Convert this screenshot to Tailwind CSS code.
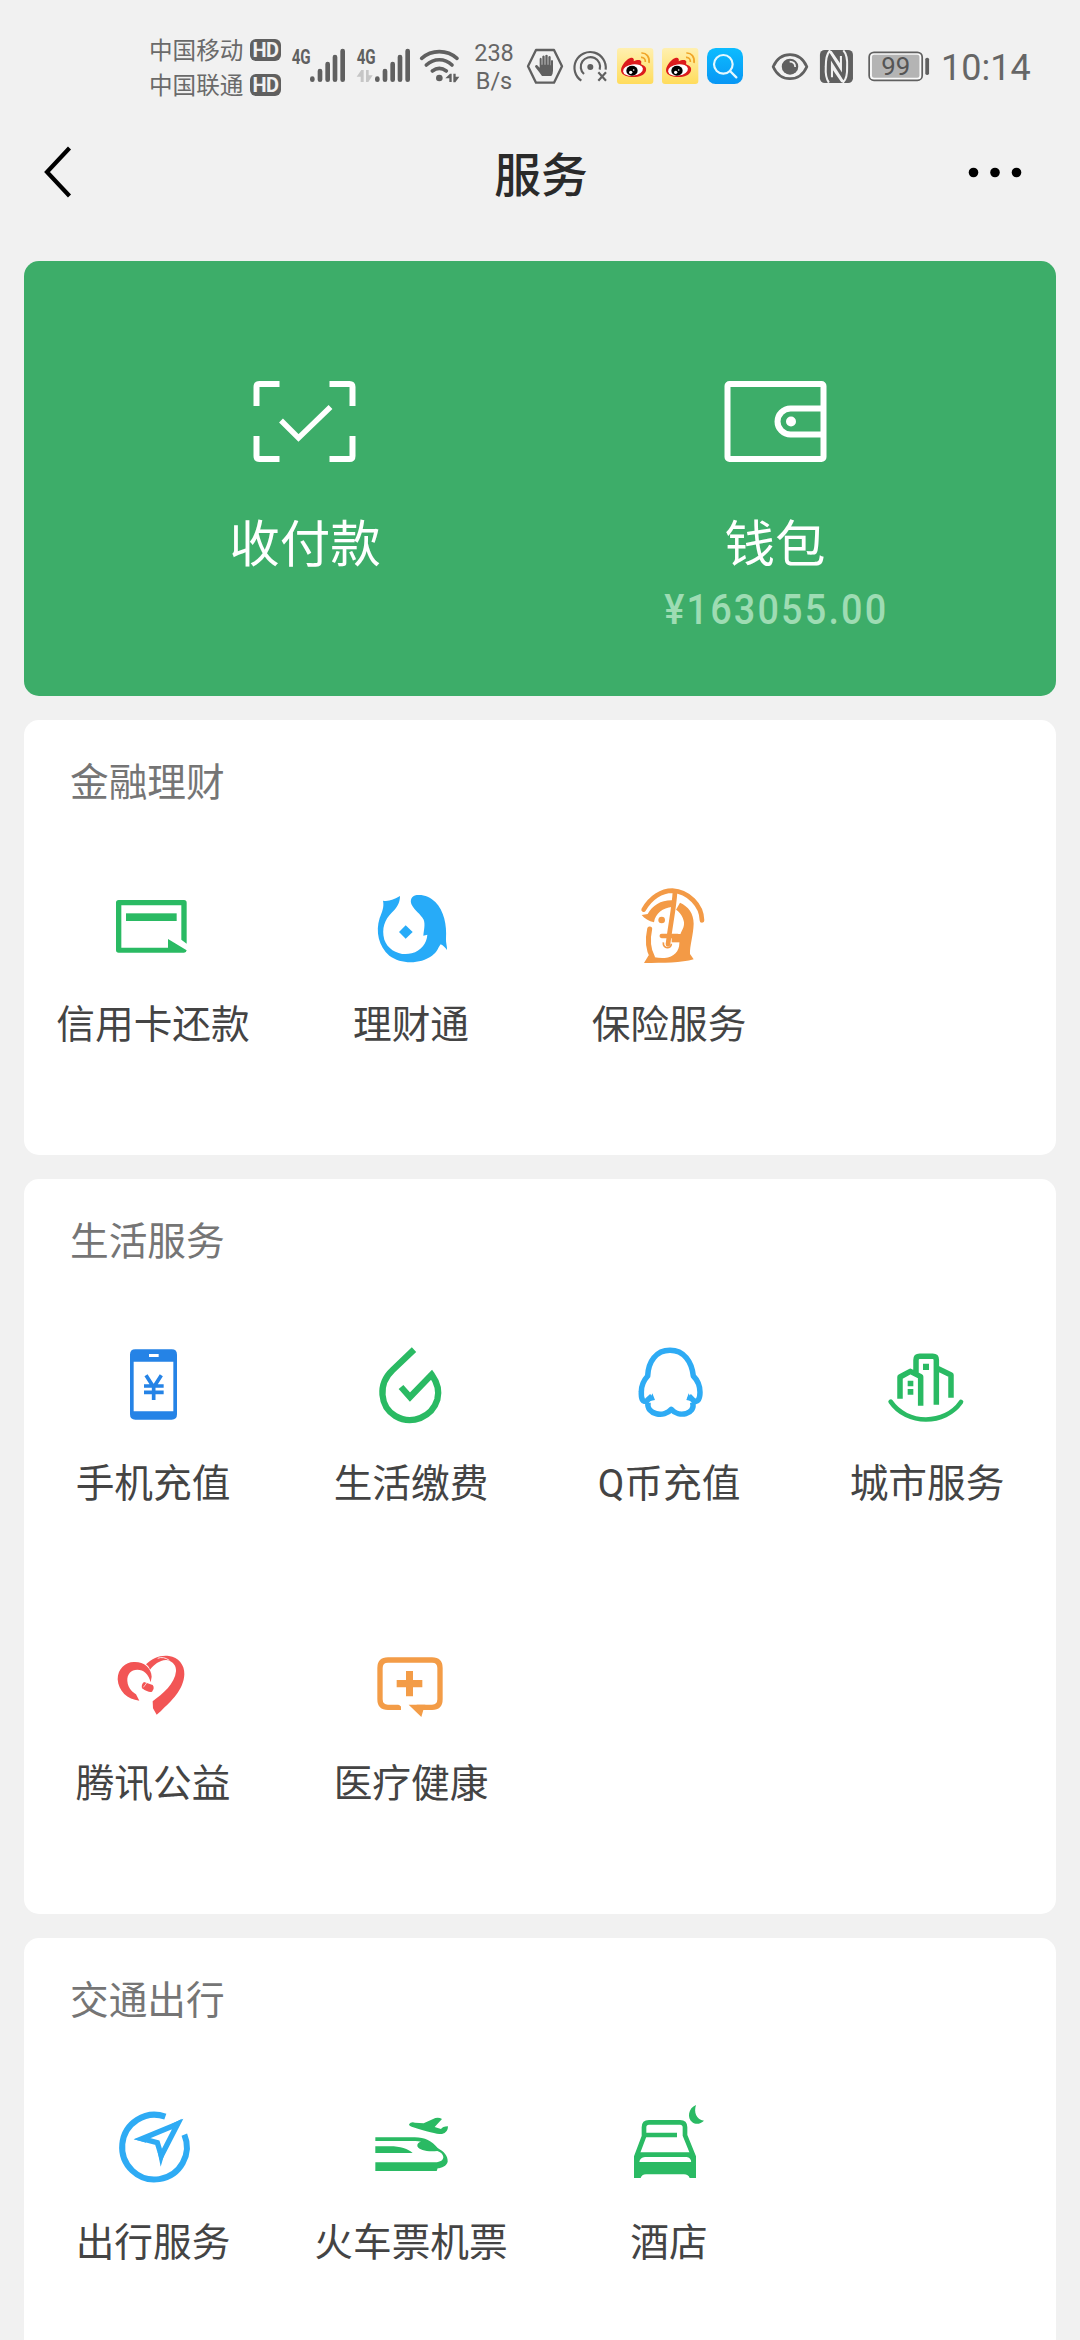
<!DOCTYPE html>
<html lang="zh-CN">
<head>
<meta charset="utf-8">
<title>服务</title>
<script src="https://cdn.jsdelivr.net/npm/@tailwindcss/browser@4"></script>
</head>
<body class="w-[1080px] h-[2340px] overflow-hidden bg-[#f1f1f1] font-['Roboto','Noto_Sans_CJK_SC',sans-serif]">

<!-- Status bar -->
<div class="flex h-[130px] pt-5 pl-[149px] text-[#606060] whitespace-nowrap">
  <div class="flex flex-col w-[101px] h-[90px] pt-[12px] text-[23.6px] leading-[35px] font-['Noto_Sans_CJK_SC',sans-serif] font-normal text-[#6a6a6a]">
    <span>中国移动</span>
    <span>中国联通</span>
  </div>
  <div class="flex flex-col w-[38px] pt-[19px] gap-[13px] font-['Roboto',sans-serif]">
    <span class="w-[31px] h-[22px] rounded-[6px] bg-[#606060] text-[#f1f1f1] text-[20px] leading-[22px] font-bold text-center tracking-[-0.5px]">HD</span>
    <span class="w-[31px] h-[22px] rounded-[6px] bg-[#606060] text-[#f1f1f1] text-[20px] leading-[22px] font-bold text-center tracking-[-0.5px]">HD</span>
  </div>
  <svg class="w-[62px] h-[90px]" viewBox="474 0 186 270" fill="#606060">
    <text x="485" y="132" font-family="Roboto" font-weight="700" font-size="62" textLength="57" lengthAdjust="spacingAndGlyphs">4G</text>
    <g stroke="#606060" stroke-width="14" stroke-linecap="round"><path d="M547 176v3M570 153v26M593 132v47M615 111v68M638 93v86"/></g>
  </svg>
  <svg class="w-[64px] h-[90px]" viewBox="660 0 192 270" fill="#606060">
    <text x="680" y="132" font-family="Roboto" font-weight="700" font-size="62" textLength="57" lengthAdjust="spacingAndGlyphs">4G</text>
    <path fill="#c6c6c6" d="M680 170l14-20h7v36h-9v-16zM728 166l-13 20h-7v-36h8v16z"/>
    <g stroke="#606060" stroke-width="14" stroke-linecap="round"><path d="M742 176v3M765 153v26M788 132v47M810 111v68M833 93v86"/></g>
  </svg>
  <svg class="w-[50px] h-[90px]" viewBox="852 0 150 270" fill="none">
    <g stroke="#606060" stroke-width="11" stroke-linecap="round"><path d="M875 115C905 88 951 88 981 115M889 135C912 114 944 114 966 135M907 153C920 143 936 143 949 153"/></g>
    <circle cx="928" cy="174" r="10" fill="#606060"/>
    <path fill="#606060" d="M946 175l14-14h5v25h-7v-11zM988 170l-12 17h-6v-26h7v9z"/>
  </svg>
  <div class="flex flex-col w-[60px] h-[90px] pt-[19px] text-[23.500px] leading-[28px] items-center text-[#666]">
    <span>238</span>
    <span>B/s</span>
  </div>
  <svg class="w-[42px] h-[90px]" viewBox="12 -30 126 270" fill="none">
    <path d="M48 60h54l24 49-24 49H48L24 109z" stroke="#606060" stroke-width="7" stroke-linejoin="round"/>
    <path fill="#606060" d="M59 128L45 110q0-6 6-5l8 8V86q3-5 6 0v18h2V79q4-5 7 0v25h2V76q4-4 7 0v28h2V80q4-4 7 0v26h1V92q3-4 6 0v30q0 9-5 16H66z"/>
  </svg>
  <svg class="w-[46px] h-[90px]" viewBox="138 -30 138 270" fill="none" stroke="#606060" stroke-width="6.500">
    <circle cx="211" cy="111" r="9" fill="#606060" stroke="none"/>
    <path d="M184 152A47 47 0 1 1 257 119M192 132A29 29 0 1 1 239 119"/>
    <path d="M235 127l23 25M258 127l-23 25"/>
  </svg>
  <svg class="w-[45px] h-[90px]" viewBox="276 -30 135 270" fill="none">
    <defs><linearGradient id="gold" x1="0" y1="0" x2="0" y2="1"><stop offset="0" stop-color="#fff0b0"/><stop offset="1" stop-color="#ffdc5c"/></linearGradient></defs>
    <rect x="291" y="54" width="109" height="108" rx="9" fill="url(#gold)"/>
    <path d="M364 69C379 68 390 81 387 99M363 82C371 81 377 88 376 96" stroke="#f0a528" stroke-width="5"/>
    <path d="M303 120C304 104 323 84 333 83C341 82 343 88 341 94C350 89 363 88 364 95C364 100 361 102 368 105C376 108 380 114 378 122C374 136 356 142 335 141C315 140 303 132 303 120Z" fill="#dc1a1c"/>
    <ellipse cx="339" cy="120" rx="30" ry="17" fill="#fff" transform="rotate(-8 339 120)"/>
    <ellipse cx="336" cy="122" rx="17" ry="15" fill="#000"/>
    <circle cx="332" cy="127" r="5" fill="#fff"/><circle cx="341" cy="120" r="2.500" fill="#fff"/>
  </svg>
  <svg class="w-[45px] h-[90px]" viewBox="276 -30 135 270" fill="none">
    <rect x="291" y="54" width="109" height="108" rx="9" fill="url(#gold)"/>
    <path d="M364 69C379 68 390 81 387 99M363 82C371 81 377 88 376 96" stroke="#f0a528" stroke-width="5"/>
    <path d="M303 120C304 104 323 84 333 83C341 82 343 88 341 94C350 89 363 88 364 95C364 100 361 102 368 105C376 108 380 114 378 122C374 136 356 142 335 141C315 140 303 132 303 120Z" fill="#dc1a1c"/>
    <ellipse cx="339" cy="120" rx="30" ry="17" fill="#fff" transform="rotate(-8 339 120)"/>
    <ellipse cx="336" cy="122" rx="17" ry="15" fill="#000"/>
    <circle cx="332" cy="127" r="5" fill="#fff"/><circle cx="341" cy="120" r="2.500" fill="#fff"/>
  </svg>
  <svg class="w-[46px] h-[90px]" viewBox="546 -30 138 270" fill="none">
    <defs><linearGradient id="sky" x1="0" y1="0" x2="0" y2="1"><stop offset="0" stop-color="#0cbcff"/><stop offset="1" stop-color="#0896f4"/></linearGradient></defs>
    <rect x="561" y="54" width="108" height="108" rx="26" fill="url(#sky)"/>
    <circle cx="610" cy="103" r="28" stroke="#e4f8ff" stroke-width="6.500"/>
    <path d="M630 123l19 19" stroke="#e4f8ff" stroke-width="7" stroke-linecap="round"/>
  </svg>
  <svg class="ml-5 w-[44px] h-[90px]" viewBox="749 0 128 270" preserveAspectRatio="none" fill="none">
    <path d="M764 140C785 92 841 92 862 140C841 188 785 188 764 140Z" stroke="#606060" stroke-width="8" stroke-linejoin="round"/>
    <circle cx="813" cy="140" r="24" fill="#606060"/>
    <path d="M812 125Q828 125 828 141" stroke="#f1f1f1" stroke-width="5"/>
  </svg>
  <svg class="ml-1 w-[40px] h-[90px]" viewBox="888.6 0 116.2 270" preserveAspectRatio="none">
    <rect x="900" y="90" width="96" height="99" rx="14" fill="#606060"/>
    <path fill="none" stroke="#f1f1f1" stroke-width="6" d="M926 188Q915 172 917 140Q917 106 928 93L961 147V108M968 91Q981 106 979 140Q980 174 968 186L935 132V172"/>
    <path fill="#f1f1f1" d="M926 93l36 56v-14l-28-42zM970 187l-36-56v14l28 42z"/>
  </svg>
  <svg class="ml-2 w-[68px] h-[90px]" viewBox="1028 0 197.5 270" preserveAspectRatio="none">
    <rect x="1043" y="97" width="154" height="84" rx="14" fill="#fafafa" stroke="#606060" stroke-width="5"/>
    <rect x="1051" y="104" width="138" height="69" rx="6" fill="#b4b4b4"/>
    <rect x="1206" y="113" width="11" height="52" rx="5" fill="#606060"/>
    <text x="1078" y="166" font-family="Roboto" font-size="76" fill="#555" textLength="84" lengthAdjust="spacingAndGlyphs">99</text>
  </svg>
  <span class="ml-[9px] mt-[26px] text-[36px] leading-[44px] text-[#666]">10:14</span>
</div>

<!-- Title bar -->
<header class="flex h-[84px] items-center justify-between pl-[44px] pr-[56px]">
  <svg class="w-[60px] h-[54px]" viewBox="44 145 60 54" fill="none"><path d="M69.500 148L47 172L69.500 196" stroke="#000" stroke-width="4.200"/></svg>
  <h1 class="text-[46.800px] leading-[60px] font-medium text-[#2a2a2a] pt-[7px] pl-[14px]">服务</h1>
  <svg class="w-[60px] h-[54px]" viewBox="964 145 60 54"><circle cx="973.500" cy="172.500" r="4.800"/><circle cx="995" cy="172.500" r="4.800"/><circle cx="1016.500" cy="172.500" r="4.800"/></svg>
</header>

<main class="flex flex-col gap-6 px-6 pt-[47px]">
  <!-- Pay and wallet -->
  <section class="grid grid-cols-2 h-[435px] rounded-[15px] bg-[#3dad69] px-[46px] pt-[119px] text-white">
    <div class="flex flex-col items-center">
      <svg class="w-[104px] h-[84px]" viewBox="252.5 380 104 84" fill="none" stroke="#fff" stroke-width="6">
        <path d="M256 406V387q0-3 3-3h20M329 384h20q3 0 3 3v19M352 436v20q0 3-3 3h-20M279 459h-20q-3 0-3-3v-20"/>
        <path d="M280.500 420.500L298 438L330 407" stroke-width="5.500"/>
      </svg>
      <div class="mt-[51px] text-[50.500px] leading-[60px]">收付款</div>
    </div>
    <div class="flex flex-col items-center">
      <svg class="w-[104px] h-[84px]" viewBox="722.5 380 104 84" fill="none" stroke="#fff" stroke-width="6">
        <rect x="727" y="384" width="96" height="75" rx="2"/>
        <path d="M823 408.500H790a13 13 0 0 0 0 26H823"/>
        <circle cx="790.500" cy="421.500" r="5" fill="#fff" stroke="none"/>
      </svg>
      <div class="mt-[51px] text-[50.500px] leading-[60px]">钱包</div>
      <div class="mt-[17px] pl-[3px] text-[42px] leading-9 font-medium text-[#9edcb3] tracking-[2.400px] scale-x-90">¥163055.00</div>
    </div>
  </section>

  <!-- Finance -->
  <section class="h-[435px] rounded-[15px] bg-white">
    <h2 class="h-[135px] pt-[35px] pl-[46px] text-[38.700px] leading-[48px] text-[#757575] font-['Noto_Sans_CJK_SC',sans-serif] font-normal">金融理财</h2>
    <div class="grid grid-cols-4 text-[38.700px] leading-10 text-[#444]">
      <div class="flex h-[300px] flex-col items-center gap-[25px] pt-[25px]">
        <svg class="w-[100px] h-[100px]" viewBox="249 540 300 300" fill="#2aba63">
          <path fill-rule="evenodd" d="M296 600h196q8 0 8 8v123l-16-12V616H304V743h140v-26l56 34q-1 7-8 7H296q-8 0-8-8V608q0-8 8-8z"/>
          <rect x="318" y="640" width="152" height="23"/>
        </svg>
        <span>信用卡还款</span>
      </div>
      <div class="flex h-[300px] flex-col items-center gap-[25px] pt-[25px]">
        <svg class="w-[100px] h-[100px]" viewBox="3 60 300 300" fill="#27abf8">
          <path d="M120 108C102 119 86 125 69 122C73 140 66 157 59 174C46 215 56 259 88 287C123 313 180 313 216 287C231 278 235 262 242 253C250 257 256 263 261 270C262 260 257 247 258 236C261 195 252 153 226 126C210 109 190 103 170 105C154 107 149 121 155 134C164 151 181 161 191 179C196 193 192 208 190 227L202 224C200 250 184 272 155 280C119 289 84 270 73 239C64 205 74 179 95 158C110 145 120 129 120 108Z"/>
          <path d="M137 196l21 20-21 20-20-20z"/>
        </svg>
        <span>理财通</span>
      </div>
      <div class="flex h-[300px] flex-col items-center gap-[25px] pt-[25px]">
        <svg class="w-[100px] h-[100px]" viewBox="777 60 300 300" fill="none">
          <g stroke="#f39a46" stroke-linecap="round">
            <path stroke-width="14" d="M851 149C872 112 905 92 937 92C986 95 1025 136 1026 181"/>
            <path stroke-width="14" d="M945 96C942 145 931 195 924 253"/>
            <path stroke-width="15" d="M869 207C863 235 863 265 877 291"/>
            <path stroke-width="13" d="M905 228H953"/>
          </g>
          <path fill="#f39a46" d="M940 121C905 119 878 135 863 162L845 165C853 176 867 183 882 187C886 160 909 143 936 141ZM960 128C985 139 1001 160 1001 191C1000 225 989 258 990 282L1001 298C965 309 910 309 852 309L866 286C878 292 894 295 914 294C942 292 958 274 958 250L962 220C966 211 973 203 972 187C970 171 960 156 948 149Z"/>
          <circle cx="905" cy="180" r="10" fill="#f39a46"/>
          <path d="M910 247C908 268 934 268 934 251" stroke="#f39a46" stroke-width="5"/>
          <path fill="#f39a46" d="M935 222h28v25h-28z"/>
        </svg>
        <span>保险服务</span>
      </div>
    </div>
  </section>

  <!-- Daily services -->
  <section class="h-[735px] rounded-[15px] bg-white">
    <h2 class="h-[135px] pt-[35px] pl-[46px] text-[38.700px] leading-[48px] text-[#757575] font-['Noto_Sans_CJK_SC',sans-serif] font-normal">生活服务</h2>
    <div class="grid grid-cols-4 text-[38.700px] leading-10 text-[#444]">
      <div class="flex h-[300px] flex-col items-center gap-[25px] pt-[25px]">
        <svg class="w-[100px] h-[100px]" viewBox="249 507 300 300" fill="#2583e6">
          <path fill-rule="evenodd" d="M346 538h109q16 0 16 16v179q0 16-16 16H346q-16 0-16-16V554q0-16 16-16zM341 575v149h119V575zM387 552v9h29v-9z"/>
          <path fill="none" stroke="#2583e6" stroke-width="11" d="M378 616l23 36 23-36M401 648v42M372 648h59M372 667h59"/>
        </svg>
        <span>手机充值</span>
      </div>
      <div class="flex h-[300px] flex-col items-center gap-[25px] pt-[25px]">
        <svg class="w-[100px] h-[100px]" viewBox="1023 507 300 300" fill="none">
          <path stroke="#2aba63" stroke-width="19" d="M1182 539L1118 600C1072 643 1080 710 1126 738C1175 767 1236 741 1252 689C1259 663 1250 635 1235 614L1170 681L1143 651"/>
        </svg>
        <span>生活缴费</span>
      </div>
      <div class="flex h-[300px] flex-col items-center gap-[25px] pt-[25px]">
        <svg class="w-[100px] h-[100px]" viewBox="177 57 300 300" fill="none">
          <path stroke="#2eabf4" stroke-width="16.500" stroke-linejoin="round" d="M276 228L262 241C247 250 243 235 244 215C244 195 252 180 263 168C265 125 288 91 330 91C372 91 395 125 400 168C412 180 420 195 420 217C420 235 414 250 400 241L387 228M264 247C258 285 314 293 334 268C356 293 408 284 398 247"/>
          <path fill="#2eabf4" d="M277 220l8 20-18 4zM386 220l-7 20 18 4z"/>
        </svg>
        <span>Q币充值</span>
      </div>
      <div class="flex h-[300px] flex-col items-center gap-[25px] pt-[25px]">
        <svg class="w-[100px] h-[100px]" viewBox="951 57 300 300" fill="none" stroke="#2aba63" stroke-width="16.500">
          <path stroke-linejoin="round" d="M1020 236V171L1051 154L1082 170V257M1068 160V120Q1068 109 1079 109H1118Q1129 109 1129 120V254M1130 144L1173 165V233"/>
          <path stroke-linecap="round" stroke-width="14" d="M992 245C1040 316 1155 316 1203 246"/>
          <path fill="#2aba63" stroke="none" d="M1089 131h18v19h-18zM1043 182h17v17h-17zM1043 207h17v17h-17z"/>
        </svg>
        <span>城市服务</span>
      </div>
      <div class="flex h-[300px] flex-col items-center gap-[25px] pt-[25px]">
        <svg class="w-[100px] h-[100px]" viewBox="189 27 300 300" fill="#f25555">
          <path d="M298 212C262 209 235 183 233 148C233 114 259 94 285 96C312 96 334 114 335 140L332 157C326 132 311 119 292 119C273 119 261 132 262 153C264 178 280 187 288 193Z"/>
          <path d="M318 103C337 84 363 74 387 78C415 82 434 104 433 133C431 180 394 213 363 243L350 254L339 235L338 214C368 192 405 161 408 124C409 108 400 96 384 91L378 90C357 91 343 104 330 119C327 111 323 106 318 103Z"/>
          <path fill="none" stroke="#fff" stroke-width="2.500" d="M353 85Q370 78 388 91"/>
          <path d="M312 156l26 9q7 9-2 20-8 5-30-10-3-12 6-19z"/>
          <path fill="none" stroke="#fff" stroke-width="2" d="M310 172l10-13"/>
        </svg>
        <span>腾讯公益</span>
      </div>
      <div class="flex h-[300px] flex-col items-center gap-[25px] pt-[25px]">
        <svg class="w-[100px] h-[100px]" viewBox="963 27 300 300" fill="#f39c47">
          <path fill="none" stroke="#f39c47" stroke-width="16" d="M1083 232H1044Q1020 232 1020 208V114Q1020 90 1044 90H1176Q1200 90 1200 114V208Q1200 232 1176 232H1130"/>
          <path fill="#fff" d="M1074 222l24 20h-8v-25z"/>
          <path d="M1106 224h50l-4 9-8 28zM1098 123h21v27h28v22h-28v27h-21v-27h-28v-22h28z"/>
        </svg>
        <span>医疗健康</span>
      </div>
    </div>
  </section>

  <!-- Travel -->
  <section class="h-[435px] rounded-[15px] bg-white">
    <h2 class="h-[135px] pt-[35px] pl-[46px] text-[38.700px] leading-[48px] text-[#757575] font-['Noto_Sans_CJK_SC',sans-serif] font-normal">交通出行</h2>
    <div class="grid grid-cols-4 text-[38.700px] leading-10 text-[#444]">
      <div class="flex h-[300px] flex-col items-center gap-[25px] pt-[25px]">
        <svg class="w-[100px] h-[100px]" viewBox="249 624 300 300" fill="none" stroke="#2eabf4">
          <path stroke-width="18" d="M436 680A97 97 0 1 0 493 734"/>
          <path stroke-width="16" d="M473 702L366 746L412 758L424 797Z"/>
          <path fill="#2eabf4" stroke="none" d="M486 686L455 702L471 714ZM342 748L378 738L378 758ZM422 830L413 785L434 789Z"/>
        </svg>
        <span>出行服务</span>
      </div>
      <div class="flex h-[300px] flex-col items-center gap-[25px] pt-[25px]">
        <svg class="w-[100px] h-[100px]" viewBox="63 54 300 300" fill="#2aba63">
          <path d="M207 133Q213 124 225 128L251 130L286 114Q297 111 306 117L284 141L303 147Q307 140 324 139Q324 158 306 162Q286 163 215 140Q207 138 207 133Z"/>
          <path d="M106 172H220C254 171 274 182 293 204C312 215 324 227 323 245C320 258 305 264 293 265L290 273H106V247H285C302 246 310 240 310 231C309 222 302 217 292 213C265 216 238 212 232 199C231 190 236 187 243 185C232 183 220 183 210 183H106Z"/>
          <path d="M106 199H150C180 199 205 207 218 219H106Z"/>
        </svg>
        <span>火车票机票</span>
      </div>
      <div class="flex h-[300px] flex-col items-center gap-[25px] pt-[25px]">
        <svg class="w-[100px] h-[100px]" viewBox="837 54 300 300" fill="#2aba63">
          <path fill="none" stroke="#2aba63" stroke-width="14" d="M889 250V230L912 169V142Q912 127 927 127H1020Q1035 127 1035 142V166L1061 230V250"/>
          <path d="M914 158h97v14h-97zM892 217h168v14H915Q900 232 898 246H1054Q1052 232 1040 231V218h20l8 20V294H1049Q1045 283 1032 283H918Q905 284 902 294H882V238z"/>
          <path d="M1068 75C1061 96 1068 118 1092 122C1082 132 1068 135 1057 127C1040 114 1045 84 1068 75Z"/>
        </svg>
        <span>酒店</span>
      </div>
    </div>
  </section>
</main>
</body>
</html>
